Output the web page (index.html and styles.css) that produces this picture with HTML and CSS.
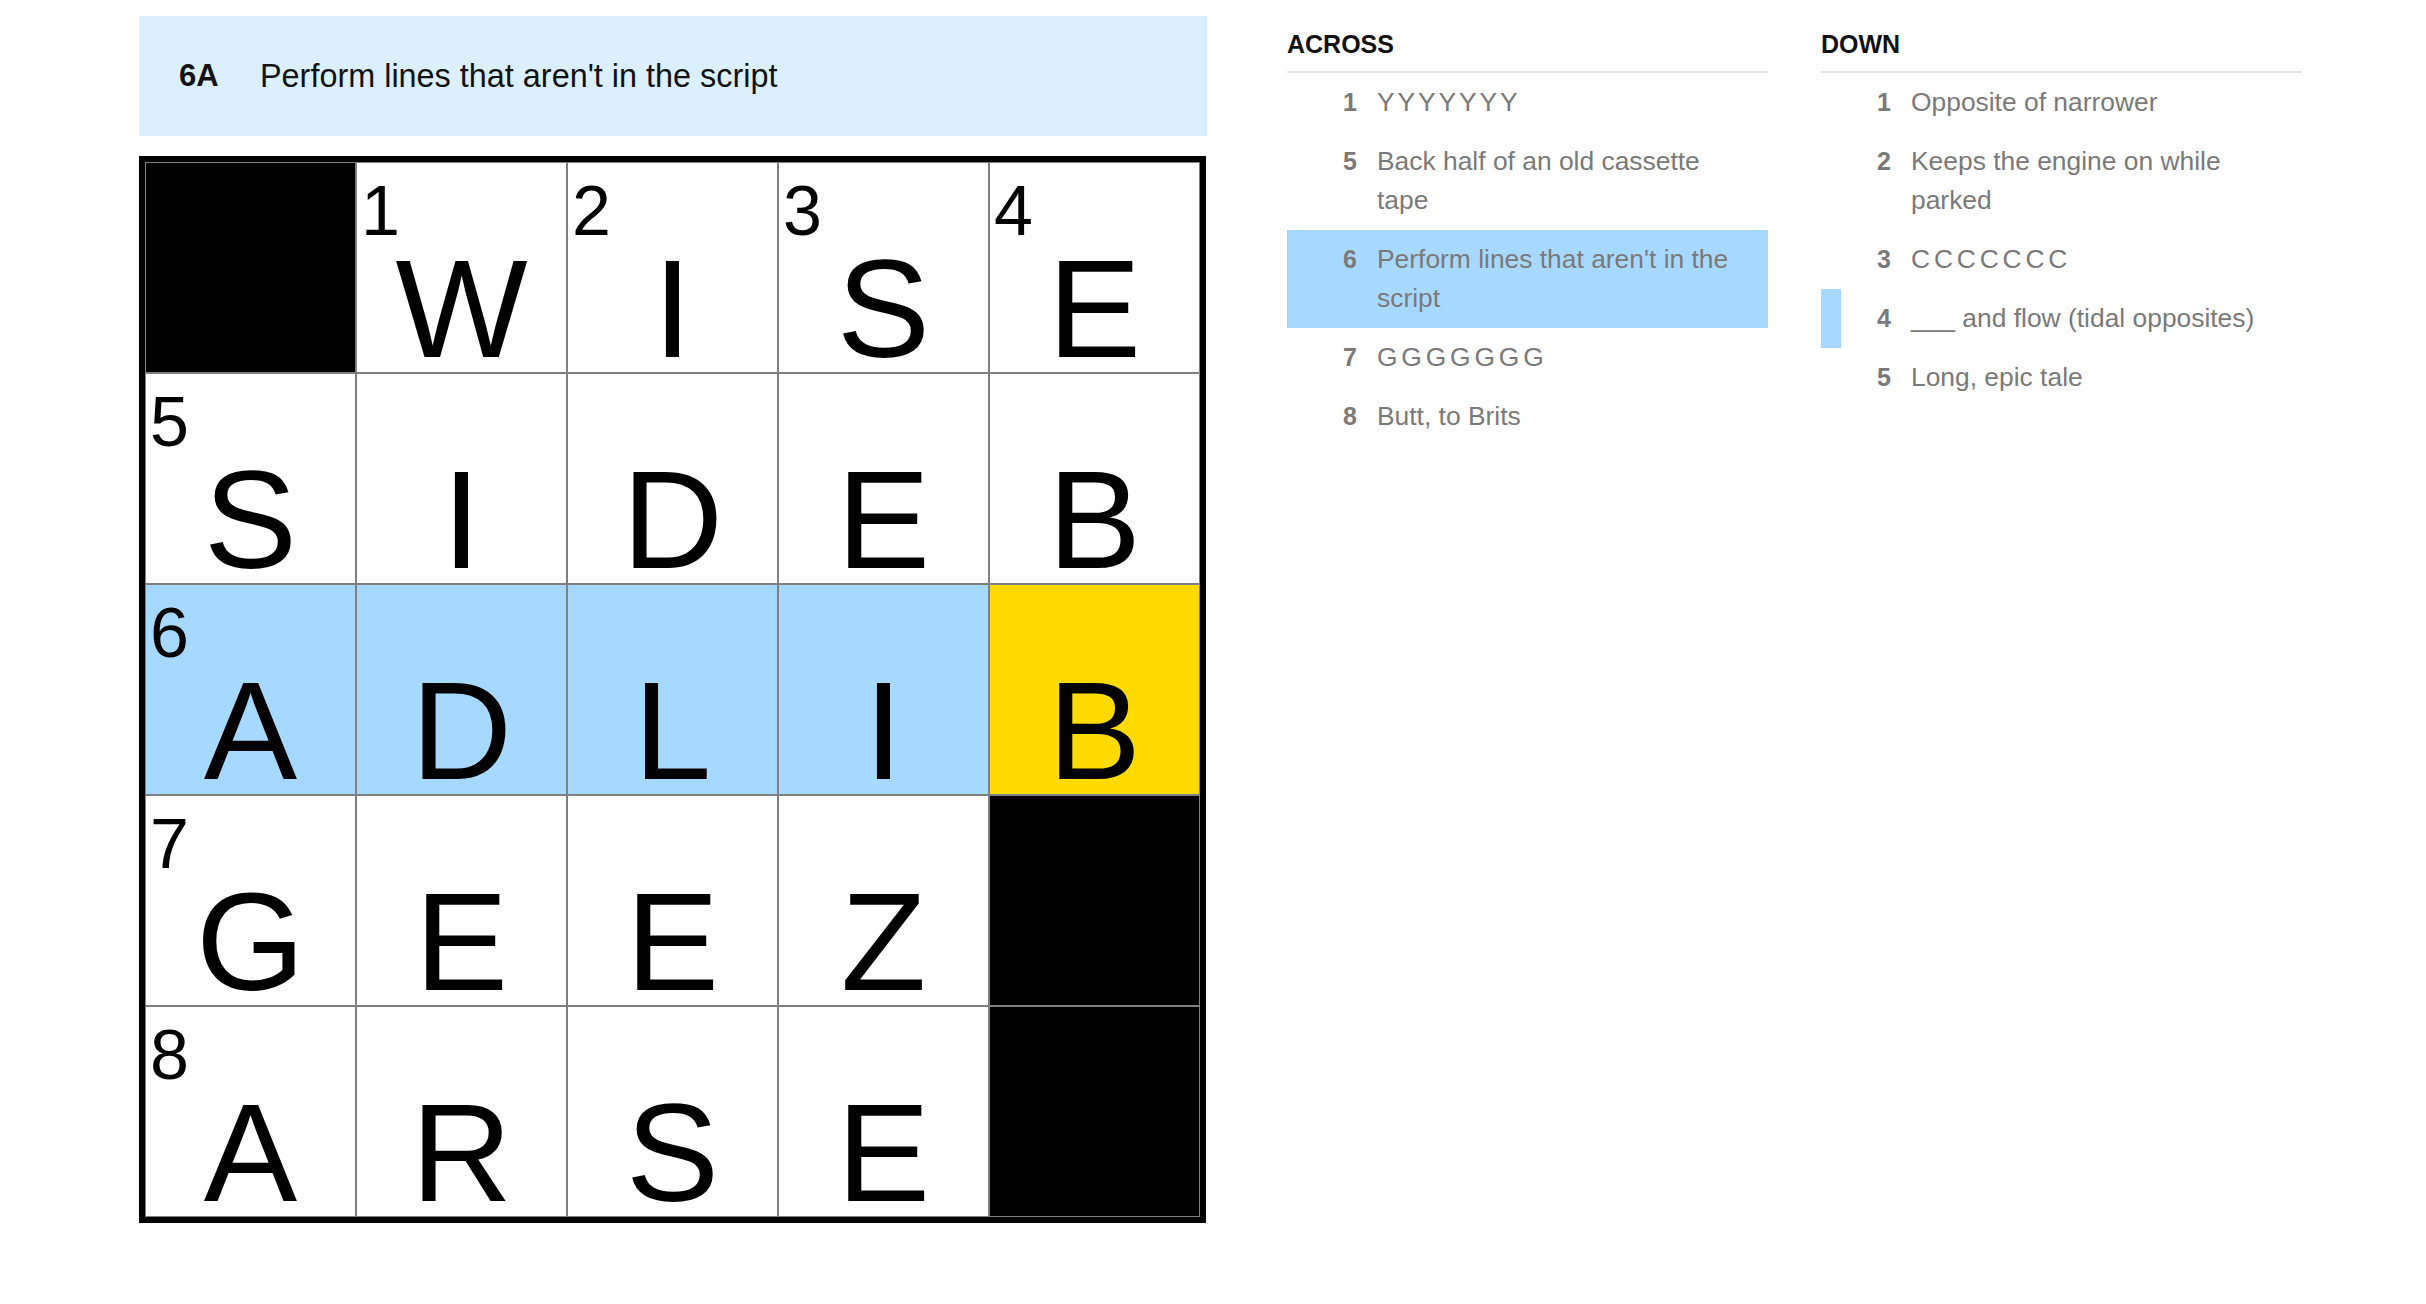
FILE: index.html
```html
<!DOCTYPE html>
<html lang="en">
<head>
<meta charset="utf-8">
<title>Mini Crossword</title>
<link rel="stylesheet" href="styles.css">
</head>
<body>
<main class="puzzle">
  <section class="board">
    <div class="clue-bar">
      <span class="clue-bar-label">6A</span>
      <span class="clue-bar-text">Perform lines that aren't in the script</span>
    </div>
    <div class="grid">
      <div class="cell block"></div>
      <div class="cell"><span class="cell-num">1</span><span class="cell-letter">W</span></div>
      <div class="cell"><span class="cell-num">2</span><span class="cell-letter">I</span></div>
      <div class="cell"><span class="cell-num">3</span><span class="cell-letter">S</span></div>
      <div class="cell"><span class="cell-num">4</span><span class="cell-letter">E</span></div>

      <div class="cell"><span class="cell-num">5</span><span class="cell-letter">S</span></div>
      <div class="cell"><span class="cell-letter">I</span></div>
      <div class="cell"><span class="cell-letter">D</span></div>
      <div class="cell"><span class="cell-letter">E</span></div>
      <div class="cell"><span class="cell-letter">B</span></div>

      <div class="cell hl"><span class="cell-num">6</span><span class="cell-letter">A</span></div>
      <div class="cell hl"><span class="cell-letter">D</span></div>
      <div class="cell hl"><span class="cell-letter">L</span></div>
      <div class="cell hl"><span class="cell-letter">I</span></div>
      <div class="cell sel"><span class="cell-letter">B</span></div>

      <div class="cell"><span class="cell-num">7</span><span class="cell-letter">G</span></div>
      <div class="cell"><span class="cell-letter">E</span></div>
      <div class="cell"><span class="cell-letter">E</span></div>
      <div class="cell"><span class="cell-letter">Z</span></div>
      <div class="cell block"></div>

      <div class="cell"><span class="cell-num">8</span><span class="cell-letter">A</span></div>
      <div class="cell"><span class="cell-letter">R</span></div>
      <div class="cell"><span class="cell-letter">S</span></div>
      <div class="cell"><span class="cell-letter">E</span></div>
      <div class="cell block"></div>
    </div>
  </section>

  <section class="clue-lists">
    <div class="clue-list">
      <h3 class="clue-list-title">Across</h3>
      <ol class="clues">
        <li class="clue"><span class="clue-num">1</span><span class="clue-text tight">Y Y Y Y Y Y Y</span></li>
        <li class="clue"><span class="clue-num">5</span><span class="clue-text">Back half of an old cassette tape</span></li>
        <li class="clue active"><span class="clue-num">6</span><span class="clue-text">Perform lines that aren't in the script</span></li>
        <li class="clue"><span class="clue-num">7</span><span class="clue-text tight">G G G G G G G</span></li>
        <li class="clue"><span class="clue-num">8</span><span class="clue-text">Butt, to Brits</span></li>
      </ol>
    </div>
    <div class="clue-list">
      <h3 class="clue-list-title">Down</h3>
      <ol class="clues">
        <li class="clue"><span class="clue-num">1</span><span class="clue-text">Opposite of narrower</span></li>
        <li class="clue"><span class="clue-num">2</span><span class="clue-text">Keeps the engine on while parked</span></li>
        <li class="clue"><span class="clue-num">3</span><span class="clue-text tight">C C C C C C C</span></li>
        <li class="clue cross"><span class="clue-num">4</span><span class="clue-text">___ and flow (tidal opposites)</span></li>
        <li class="clue"><span class="clue-num">5</span><span class="clue-text">Long, epic tale</span></li>
      </ol>
    </div>
  </section>
</main>
</body>
</html>
```

FILE: styles.css
```css
* {
  box-sizing: border-box;
}

body {
  margin: 0;
  background: #ffffff;
  font-family: "Liberation Sans", Arial, sans-serif;
  color: #121212;
}

.puzzle {
  display: flex;
  align-items: flex-start;
  padding: 16px 0 0 139px;
}

/* ---------- board ---------- */
.board {
  width: 1068px;
  display: flex;
  flex-direction: column;
  gap: 20px;
}

.clue-bar {
  height: 120px;
  background: #dcefff;
  display: flex;
  align-items: center;
  padding-left: 40px;
}

.clue-bar-label {
  width: 81px;
  flex-shrink: 0;
  font-size: 31px;
  font-weight: 700;
  color: #121212;
}

.clue-bar-text {
  font-size: 32.4px;
  color: #121212;
}

.grid {
  display: grid;
  grid-template-columns: repeat(5, 209px);
  grid-template-rows: repeat(5, 209px);
  gap: 2px;
  padding: 1px;
  width: max-content;
  background: #808080;
  border: 6px solid #000000;
}

.cell {
  position: relative;
  background: #ffffff;
  text-align: center;
  color: #000000;
}

.cell.block {
  background: #000000;
}

.cell.hl {
  background: #a7d8ff;
}

.cell.sel {
  background: #ffda00;
}

.cell-num {
  position: absolute;
  left: 4px;
  top: 13px;
  font-size: 70px;
  line-height: 70px;
}

.cell-letter {
  display: block;
  padding-top: 86px;
  font-size: 140px;
  line-height: 120px;
}

/* ---------- clue lists ---------- */
.clue-lists {
  display: flex;
  gap: 53px;
  margin-left: 80px;
  padding-top: 13px;
}

.clue-list {
  width: 481px;
}

.clue-list-title {
  margin: 0;
  padding-bottom: 12px;
  border-bottom: 2px solid #e6e6e6;
  font-size: 25px;
  line-height: 30px;
  font-weight: 700;
  text-transform: uppercase;
  color: #121212;
}

.clues {
  list-style: none;
  margin: 0;
  padding: 0;
}

.clue {
  display: flex;
  align-items: baseline;
  padding: 10px 30px 10px 0;
  border-left: 20px solid transparent;
  font-size: 26.4px;
  line-height: 39px;
  color: #7a7a7a;
}

.clue.active {
  background: #a7d8ff;
}

.clue.cross {
  border-left-color: #a7d8ff;
}

.clue-num {
  width: 50px;
  flex-shrink: 0;
  margin-right: 20px;
  text-align: right;
  font-size: 25px;
  font-weight: 700;
}

.clue-text {
  flex: 1;
}

.clue-text.tight {
  word-spacing: -3.5px;
}
```
